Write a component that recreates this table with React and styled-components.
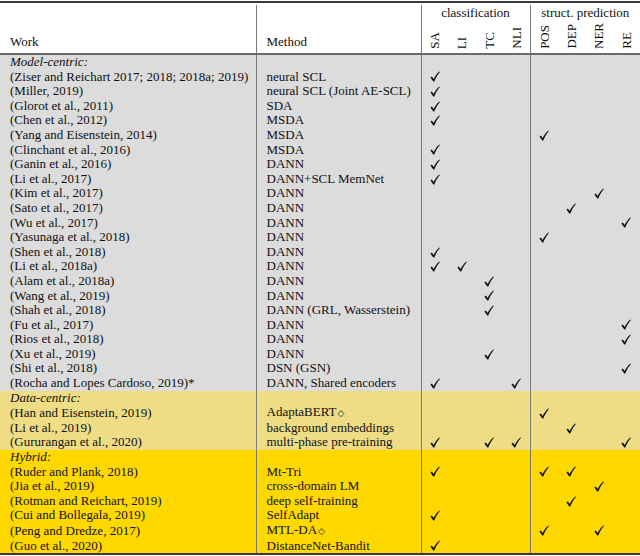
import React from "react";
import styled, { createGlobalStyle } from "styled-components";

const GlobalStyle = createGlobalStyle`
  body {
    margin: 0;
    background: #fff;
    font-family: "Liberation Serif", "Times New Roman", serif;
    color: #111;
  }
`;

const TONES = {
  gray: "#dcdcdc",
  sand: "#eedd85",
  gold: "#ffd800",
};

const CLS = ["SA", "LI", "TC", "NLI"];
const STR = ["POS", "DEP", "NER", "RE"];
const TASKS = [...CLS, ...STR];

const rows = [
  { group: "Model-centric:", tone: "gray" },
  { work: "(Ziser and Reichart 2017; 2018; 2018a; 2019)", method: "neural SCL", checks: ["SA"], tone: "gray" },
  { work: "(Miller, 2019)", method: "neural SCL (Joint AE-SCL)", checks: ["SA"], tone: "gray" },
  { work: "(Glorot et al., 2011)", method: "SDA", checks: ["SA"], tone: "gray" },
  { work: "(Chen et al., 2012)", method: "MSDA", checks: ["SA"], tone: "gray" },
  { work: "(Yang and Eisenstein, 2014)", method: "MSDA", checks: ["POS"], tone: "gray" },
  { work: "(Clinchant et al., 2016)", method: "MSDA", checks: ["SA"], tone: "gray" },
  { work: "(Ganin et al., 2016)", method: "DANN", checks: ["SA"], tone: "gray" },
  { work: "(Li et al., 2017)", method: "DANN+SCL MemNet", checks: ["SA"], tone: "gray" },
  { work: "(Kim et al., 2017)", method: "DANN", checks: ["NER"], tone: "gray" },
  { work: "(Sato et al., 2017)", method: "DANN", checks: ["DEP"], tone: "gray" },
  { work: "(Wu et al., 2017)", method: "DANN", checks: ["RE"], tone: "gray" },
  { work: "(Yasunaga et al., 2018)", method: "DANN", checks: ["POS"], tone: "gray" },
  { work: "(Shen et al., 2018)", method: "DANN", checks: ["SA"], tone: "gray" },
  { work: "(Li et al., 2018a)", method: "DANN", checks: ["SA", "LI"], tone: "gray" },
  { work: "(Alam et al., 2018a)", method: "DANN", checks: ["TC"], tone: "gray" },
  { work: "(Wang et al., 2019)", method: "DANN", checks: ["TC"], tone: "gray" },
  { work: "(Shah et al., 2018)", method: "DANN (GRL, Wasserstein)", checks: ["TC"], tone: "gray" },
  { work: "(Fu et al., 2017)", method: "DANN", checks: ["RE"], tone: "gray" },
  { work: "(Rios et al., 2018)", method: "DANN", checks: ["RE"], tone: "gray" },
  { work: "(Xu et al., 2019)", method: "DANN", checks: ["TC"], tone: "gray" },
  { work: "(Shi et al., 2018)", method: "DSN (GSN)", checks: ["RE"], tone: "gray" },
  { work: "(Rocha and Lopes Cardoso, 2019)*", method: "DANN, Shared encoders", checks: ["SA", "NLI"], tone: "gray" },
  { group: "Data-centric:", tone: "sand" },
  { work: "(Han and Eisenstein, 2019)", method: "AdaptaBERT", mark: true, checks: ["POS"], tone: "sand" },
  { work: "(Li et al., 2019)", method: "background embeddings", checks: ["DEP"], tone: "sand" },
  { work: "(Gururangan et al., 2020)", method: "multi-phase pre-training", checks: ["SA", "TC", "NLI", "RE"], tone: "sand" },
  { group: "Hybrid:", tone: "gold" },
  { work: "(Ruder and Plank, 2018)", method: "Mt-Tri", checks: ["SA", "POS", "DEP"], tone: "gold" },
  { work: "(Jia et al., 2019)", method: "cross-domain LM", checks: ["NER"], tone: "gold" },
  { work: "(Rotman and Reichart, 2019)", method: "deep self-training", checks: ["DEP"], tone: "gold" },
  { work: "(Cui and Bollegala, 2019)", method: "SelfAdapt", checks: ["SA"], tone: "gold" },
  { work: "(Peng and Dredze, 2017)", method: "MTL-DA", mark: true, checks: ["POS", "NER"], tone: "gold" },
  { work: "(Guo et al., 2020)", method: "DistanceNet-Bandit", checks: ["SA"], tone: "gold" },
];

const Table = styled.table`
  width: 640px;
  margin-top: 1px;
  border-collapse: collapse;
  table-layout: fixed;
  border-top: 2px solid #3a3a3a;
  border-bottom: 2px solid #3a3a3a;
  font-family: "Liberation Serif", "Times New Roman", serif;
  font-size: 13px;
  color: #111;
`;

const Head = styled.thead`
  border-bottom: 2px solid #6a6a6a;
`;

const Spacer = styled.tr`
  height: 3px;
`;

const HeadCell = styled.th`
  font-family: "Liberation Serif", "Times New Roman", serif;
  font-weight: normal;
  text-align: ${(p) => (p.$center ? "center" : "left")};
  vertical-align: ${(p) => (p.$bottom ? "bottom" : "middle")};
  padding: ${(p) => (p.$bottom ? "0 0 4px 10px" : "0")};
  border-left: ${(p) => (p.$rule ? "1.5px solid #7a7a7a" : "none")};
  height: ${(p) => (p.$tall ? "32px" : "15px")};
  line-height: 15px;
`;

const Rotated = styled.span`
  display: inline-block;
  writing-mode: vertical-rl;
  transform: rotate(180deg);
  line-height: 1;
`;

const Row = styled.tr`
  background: ${(p) => TONES[p.$tone]};
  height: 14.6px;
`;

const Cell = styled.td`
  font-family: "Liberation Serif", "Times New Roman", serif;
  padding: 0 0 0 ${(p) => (p.$check ? "0" : "10px")};
  line-height: 14.6px;
  height: 14.6px;
  white-space: nowrap;
  overflow: hidden;
  text-align: ${(p) => (p.$check ? "center" : "left")};
  vertical-align: middle;
  border-left: ${(p) => (p.$rule ? "1.5px solid #7a7a7a" : "none")};
  font-style: ${(p) => (p.$italic ? "italic" : "normal")};
`;

const CheckSvg = styled.svg`
  display: block;
  margin: 0 auto;
  width: 10px;
  height: 11px;
`;

const Check = () => (
  <CheckSvg viewBox="0 0 10 11">
    <path
      d="M0.4 6.6 L1.9 5.6 L3.6 7.9 C4.9 5.1 7 2.4 9.4 0.4 L9.9 0.9 C7.7 3.2 5.8 6.5 4.3 10.6 L3.3 10.6 Z"
      fill="#111"
    />
  </CheckSvg>
);

const Diamond = styled.span`
  font-family: "DejaVu Sans", sans-serif;
  font-size: 9px;
  margin-left: 1px;
`;

const App = () => {
  return (
    <>
      <GlobalStyle />
      <Table>
        <colgroup>
          <col style={{ width: 256 }} />
          <col style={{ width: 165 }} />
          {CLS.map((t) => (
            <col key={t} style={{ width: 27.25 }} />
          ))}
          {STR.map((t) => (
            <col key={t} style={{ width: 27.5 }} />
          ))}
        </colgroup>
        <Head>
          <Spacer>
            <th colSpan={10} />
          </Spacer>
          <tr>
            <HeadCell rowSpan={2} $bottom>
              Work
            </HeadCell>
            <HeadCell rowSpan={2} $bottom $rule>
              Method
            </HeadCell>
            <HeadCell colSpan={4} $center $rule>
              classification
            </HeadCell>
            <HeadCell colSpan={4} $center $rule>
              struct. prediction
            </HeadCell>
          </tr>
          <tr>
            {TASKS.map((t, i) => (
              <HeadCell key={t} $center $bottom $tall $rule={i === 0 || i === 4} style={{ padding: "0 0 1px 0" }}>
                <Rotated>{t}</Rotated>
              </HeadCell>
            ))}
          </tr>
        </Head>
        <tbody>
          {rows.map((r, i) =>
            r.group ? (
              <Row key={i} $tone={r.tone}>
                <Cell $italic>{r.group}</Cell>
                <Cell $rule />
                {TASKS.map((t, j) => (
                  <Cell key={t} $check $rule={j === 0 || j === 4} />
                ))}
              </Row>
            ) : (
              <Row key={i} $tone={r.tone}>
                <Cell>{r.work}</Cell>
                <Cell $rule>
                  {r.method}
                  {r.mark && <Diamond>◇</Diamond>}
                </Cell>
                {TASKS.map((t, j) => (
                  <Cell key={t} $check $rule={j === 0 || j === 4}>
                    {r.checks.includes(t) && <Check />}
                  </Cell>
                ))}
              </Row>
            )
          )}
        </tbody>
      </Table>
    </>
  );
};

export default App;
